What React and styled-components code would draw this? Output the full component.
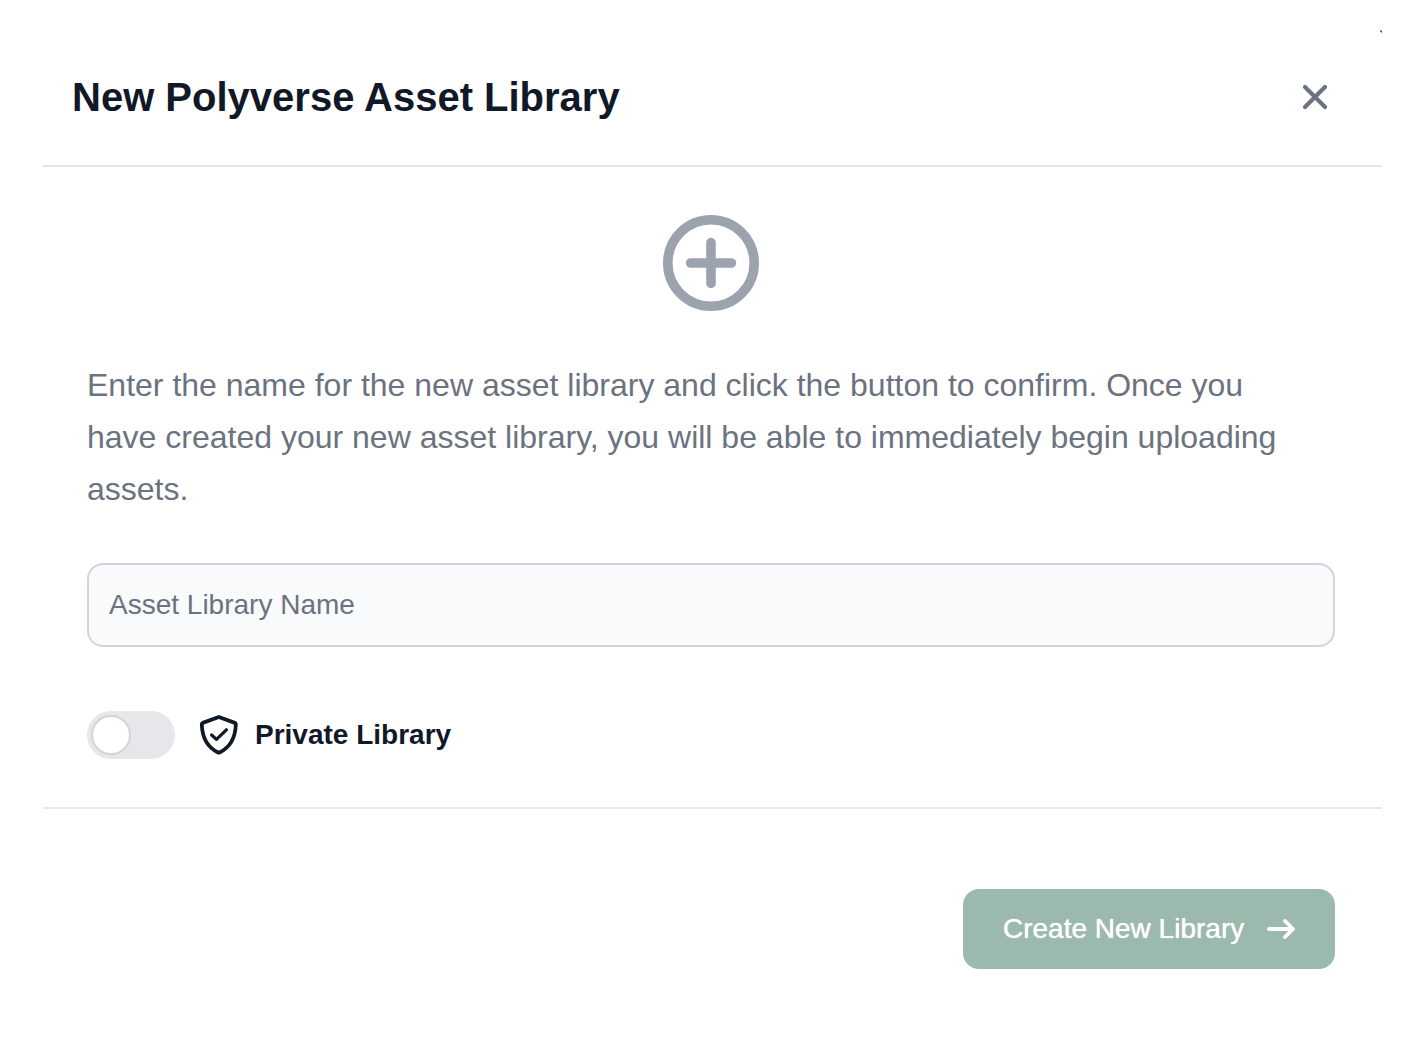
import React, { useState } from "react";
import styled, { createGlobalStyle } from "styled-components";

export default function App() {
    const [name, setName] = useState("");
    const [isPrivate, setIsPrivate] = useState(false);

    const onSubmit = (e) => {
        e.preventDefault();
    };

    return (
        <>
            <GlobalStyle />
            <Dialog role="dialog" aria-labelledby="dialog-title" onSubmit={onSubmit}>
                <CornerMark viewBox="0 0 2 3" aria-hidden="true">
                    <path d="M0 0L2 1V3L0 1Z" fill="#333" />
                </CornerMark>

                {/* Header */}
                <Header>
                    <Title id="dialog-title">New Polyverse Asset Library</Title>
                    <CloseButton type="button" aria-label="Close">
                        <svg width="40" height="40" viewBox="0 0 40 40" fill="none">
                            <path d="M10 10L30 30M30 10L10 30" stroke="#6b7280" strokeWidth="4.2" strokeLinecap="round" />
                        </svg>
                    </CloseButton>
                </Header>

                {/* Body */}
                <Body>
                    <PlusIcon viewBox="0 0 96 96" fill="none" aria-hidden="true">
                        <circle cx="48" cy="48" r="43.2" />
                        <path d="M48 27.6V68.4M27.6 48H68.4" strokeLinecap="round" />
                    </PlusIcon>

                    <Description>
                        Enter the name for the new asset library and click the button to confirm. Once you
                        have created your new asset library, you will be able to immediately begin uploading
                        assets.
                    </Description>

                    <NameInput
                        type="text"
                        aria-label="Asset Library Name"
                        placeholder="Asset Library Name"
                        value={name}
                        onChange={(e) => setName(e.target.value)}
                    />

                    <ToggleLabel>
                        <Toggle
                            type="checkbox"
                            role="switch"
                            checked={isPrivate}
                            onChange={(e) => setIsPrivate(e.target.checked)}
                        />
                        <ShieldIcon viewBox="0 0 40 40" fill="none" aria-hidden="true">
                            <path
                                d="M19.8 2L35.2 7.6Q36.9 8.2 36.8 10C36.2 23 30.5 32.5 21 37.2Q19.8 37.8 18.6 37.2C9.2 32.5 3.4 23 2.8 10Q2.7 8.2 4.4 7.6Z"
                                strokeWidth="3.8"
                            />
                            <path d="M12.6 20L17.4 24.4L27.4 14.8" strokeWidth="3.2" />
                        </ShieldIcon>
                        Private Library
                    </ToggleLabel>
                </Body>

                {/* Footer */}
                <Footer>
                    <CreateButton type="submit">
                        Create New Library
                        <svg width="28" height="20" viewBox="0 0 28 20" fill="none" aria-hidden="true">
                            <path
                                d="M2 10H26M18 2L26 10L18 18"
                                stroke="currentColor"
                                strokeWidth="3.8"
                                strokeLinecap="round"
                                strokeLinejoin="round"
                            />
                        </svg>
                    </CreateButton>
                </Footer>
            </Dialog>
        </>
    );
}

/* ------------------------------------------
   Styled Components
------------------------------------------- */

const GlobalStyle = createGlobalStyle`
  *, *::before, *::after {
    box-sizing: border-box;
  }

  body {
    margin: 0;
    padding: 30px 39px 30px 43px;
    background: #fff;
    color: #111827;
    font-family: "Liberation Sans", Arial, sans-serif;
  }
`;

const Dialog = styled.form`
  position: relative;
`;

const CornerMark = styled.svg`
  position: absolute;
  top: 0;
  right: 0;
  width: 2px;
  height: 3px;
`;

const Header = styled.header`
  display: flex;
  align-items: center;
  justify-content: space-between;
  padding: 39px 47px 40px 29px;
  border-bottom: 2px solid #e5e7eb;
`;

const Title = styled.h3`
  margin: 0;
  font-size: 40px;
  font-weight: 700;
  line-height: 56px;
`;

const CloseButton = styled.button`
  display: flex;
  padding: 0;
  border: 0;
  background: transparent;
  cursor: pointer;
`;

const Body = styled.div`
  display: flex;
  flex-direction: column;
  padding: 48px 47px 48px 44px;
  border-bottom: 2px solid #e5e7eb;
`;

const PlusIcon = styled.svg`
  align-self: center;
  width: 96px;
  height: 96px;
  stroke: #9ca3af;
  stroke-width: 9.6px;
`;

const Description = styled.p`
  margin: 48px 0;
  padding-right: 32px;
  color: #6b7280;
  font-size: 32px;
  line-height: 52px;
`;

const NameInput = styled.input`
  width: 100%;
  height: 84px;
  padding: 0 20px;
  border: 2px solid #d1d5db;
  border-radius: 16px;
  background: #f9fafb;
  color: #111827;
  font-family: inherit;
  font-size: 28px;

  &::placeholder {
    color: #6b7280;
    opacity: 1;
  }
`;

const ToggleLabel = styled.label`
  display: flex;
  align-items: center;
  align-self: flex-start;
  margin-top: 64px;
  font-size: 28px;
  font-weight: 700;
  line-height: 48px;
  cursor: pointer;
`;

const Toggle = styled.input`
  appearance: none;
  display: flex;
  width: 88px;
  height: 48px;
  margin: 0;
  padding: 4px;
  border-radius: 24px;
  background: #e5e7eb;
  cursor: pointer;

  &::before {
    content: "";
    width: 40px;
    height: 40px;
    border: 2px solid #d1d5db;
    border-radius: 50%;
    background: #fff;
  }

  &:checked {
    justify-content: flex-end;
    background: #9bb9ad;
  }
`;

const ShieldIcon = styled.svg`
  width: 40px;
  height: 40px;
  margin: 0 16px 0 24px;
  stroke: #111827;
  stroke-linecap: round;
  stroke-linejoin: round;
`;

const Footer = styled.footer`
  display: flex;
  justify-content: flex-end;
  padding: 80px 47px 48px;
`;

const CreateButton = styled.button`
  display: flex;
  align-items: center;
  justify-content: space-between;
  gap: 16px;
  min-width: 372px;
  height: 80px;
  padding: 0 40px;
  border: 0;
  border-radius: 16px;
  background: #9bb9ad;
  color: #fff;
  font-family: inherit;
  font-size: 28px;
  font-weight: 500;
  text-shadow: 0 0 1px currentColor;
  white-space: nowrap;
  cursor: pointer;
`;
